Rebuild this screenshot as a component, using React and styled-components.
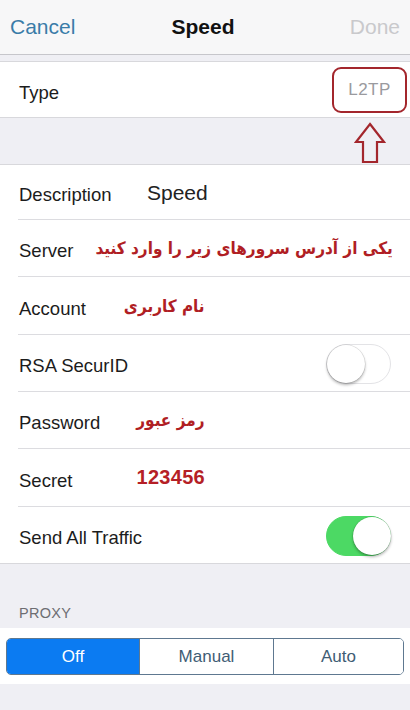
import React from "react";
import styled, { createGlobalStyle } from "styled-components";

const Global = createGlobalStyle`
  html, body { margin: 0; padding: 0; background: #efeff4; }
  body { font-family: "Liberation Sans", "Noto Sans", Arial, sans-serif; }
  * { box-sizing: border-box; }
`;

const Page = styled.div`
  width: 410px;
  height: 710px;
  background: #efeff4;
  display: flex;
  flex-direction: column;
  overflow: hidden;
`;

const NavBar = styled.div`
  height: 55px;
  background: #f7f7f8;
  border-bottom: 1px solid #c6c6cb;
  display: grid;
  grid-template-columns: 1fr auto 1fr;
  align-items: center;
  padding: 0 10px 0 10px;
`;

const NavButton = styled.span`
  font-size: 21px;
  color: ${(p) => (p.$disabled ? "#c9c9cc" : "#3a7ca8")};
  justify-self: ${(p) => (p.$right ? "end" : "start")};
`;

const NavTitle = styled.span`
  font-size: 21px;
  font-weight: bold;
  color: #111;
  margin-left: -4px;
`;

const Gap = styled.div`
  height: ${(p) => p.$h}px;
  flex: none;
`;

const Group = styled.div`
  background: #fff;
  border-top: 1px solid #d8d8dc;
  border-bottom: 1px solid #d8d8dc;
  position: relative;
`;

const Row = styled.div`
  height: ${(p) => p.$h || 57}px;
  margin-left: 18px;
  padding: 6px 18px 0 0;
  display: flex;
  align-items: center;
  border-bottom: ${(p) => (p.$last ? "none" : "1px solid #dcdce0")};
  position: relative;
  white-space: nowrap;
`;

const Label = styled.span`
  font-size: 18.5px;
  color: #1c1c1c;
  width: ${(p) => (p.$w ? p.$w + "px" : "auto")};
  flex: none;
  padding-left: 1px;
`;

const Value = styled.span`
  font-size: 21px;
  color: #222;
  margin-top: -5px;
`;

const Persian = styled.span`
  font-family: "DejaVu Sans Condensed", "DejaVu Sans", sans-serif;
  font-weight: bold;
  font-size: ${(p) => p.$size || 16}px;
  color: #b01e24;
  direction: rtl;
  margin-left: ${(p) => p.$ml || 0}px;
  margin-top: -6px;
`;

const RedNumber = styled.span`
  font-family: "Liberation Sans", sans-serif;
  font-weight: bold;
  font-size: 20px;
  color: #b51f26;
  margin-left: 64px;
  margin-top: -7px;
  letter-spacing: 0.3px;
`;

const TypeValue = styled.span`
  margin-left: auto;
  margin-right: -15px;
  margin-top: -5px;
  width: 75px;
  height: 46px;
  border: 2px solid #a3262c;
  border-radius: 9px;
  display: flex;
  align-items: center;
  justify-content: center;
  font-size: 17px;
  color: #9a9a9e;
  letter-spacing: 0.5px;
`;

const ArrowMark = styled.svg`
  position: absolute;
  right: 24px;
  top: 60px;
`;

const Switch = styled.div`
  margin-left: auto;
  margin-right: 1px;
  margin-top: -4px;
  width: 65px;
  height: 40px;
  border-radius: 20px;
  background: ${(p) => (p.$on ? "#4cd964" : "#fff")};
  border: 1.5px solid ${(p) => (p.$on ? "#4cd964" : "#e3e3e6")};
  position: relative;
  flex: none;
`;

const Knob = styled.div`
  position: absolute;
  top: -0.5px;
  ${(p) => (p.$on ? "right: -0.5px;" : "left: -0.5px;")}
  width: 38px;
  height: 38px;
  border-radius: 50%;
  background: #fff;
  box-shadow: 0 2px 3px rgba(0, 0, 0, 0.3), 0 0 0 0.5px rgba(0, 0, 0, 0.15);
`;

const SectionHeader = styled.div`
  height: 64px;
  display: flex;
  align-items: flex-end;
  padding: 0 0 7px 19px;
  font-size: 14.5px;
  color: #6d6d72;
  letter-spacing: 0.3px;
`;

const SegmentStrip = styled.div`
  background: #fff;
  height: 56px;
  padding: 10px 6px 9px 6px;
  display: flex;
`;

const Segmented = styled.div`
  flex: 1;
  display: grid;
  grid-template-columns: 132px 134px 1fr;
  border: 1px solid #5e7890;
  border-radius: 5px;
  overflow: hidden;
`;

const Segment = styled.div`
  display: flex;
  align-items: center;
  justify-content: center;
  font-size: 17px;
  background: ${(p) => (p.$active ? "#0b7bf2" : "#fff")};
  color: ${(p) => (p.$active ? "#fff" : "#3f5d75")};
  border-left: ${(p) => (p.$first ? "none" : "1px solid #5e7890")};
`;

export default function App() {
  return (
    <Page>
      <Global />
      <NavBar>
        <NavButton>Cancel</NavButton>
        <NavTitle>Speed</NavTitle>
        <NavButton $right $disabled>Done</NavButton>
      </NavBar>
      <Gap $h={6} />
      <Group>
        <Row $h={55} $last>
          <Label>Type</Label>
          <TypeValue>L2TP</TypeValue>
        </Row>
        <ArrowMark width="32" height="42" viewBox="0 0 32 42">
          <path
            d="M16 2 L30 20 L23 20 L23 40 L9 40 L9 20 L2 20 Z"
            fill="none"
            stroke="#a3262c"
            strokeWidth="2.2"
            strokeLinejoin="miter"
          />
        </ArrowMark>
      </Group>
      <Gap $h={46} />
      <Group>
        <Row $h={55}>
          <Label $w={129}>Description</Label>
          <Value>Speed</Value>
        </Row>
        <Row>
          <Label>Server</Label>
          <Persian $ml={22} $size={17}>یکی از آدرس سرورهای زیر را وارد کنید</Persian>
        </Row>
        <Row $h={58}>
          <Label>Account</Label>
          <Persian $ml={38} $size={17}>نام کاربری</Persian>
        </Row>
        <Row>
          <Label>RSA SecurID</Label>
          <Switch>
            <Knob />
          </Switch>
        </Row>
        <Row>
          <Label>Password</Label>
          <Persian $ml={36} $size={17}>رمز عبور</Persian>
        </Row>
        <Row $h={58}>
          <Label>Secret</Label>
          <RedNumber>123456</RedNumber>
        </Row>
        <Row $h={56} $last>
          <Label>Send All Traffic</Label>
          <Switch $on>
            <Knob $on />
          </Switch>
        </Row>
      </Group>
      <SectionHeader>PROXY</SectionHeader>
      <SegmentStrip>
        <Segmented>
          <Segment $active $first>Off</Segment>
          <Segment>Manual</Segment>
          <Segment>Auto</Segment>
        </Segmented>
      </SegmentStrip>
    </Page>
  );
}
